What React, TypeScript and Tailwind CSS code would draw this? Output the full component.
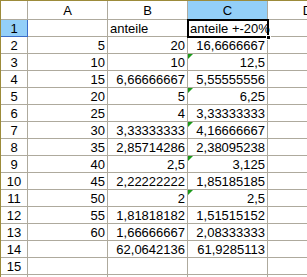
const rows: [string, string, string][] = [
  ["", "anteile", "anteile +-20%"],
  ["5", "20", "16,6666667"],
  ["10", "10", "12,5"],
  ["15", "6,66666667", "5,55555556"],
  ["20", "5", "6,25"],
  ["25", "4", "3,33333333"],
  ["30", "3,33333333", "4,16666667"],
  ["35", "2,85714286", "2,38095238"],
  ["40", "2,5", "3,125"],
  ["45", "2,22222222", "1,85185185"],
  ["50", "2", "2,5"],
  ["55", "1,81818182", "1,51515152"],
  ["60", "1,66666667", "2,08333333"],
  ["", "62,0642136", "61,9285113"],
  ["", "", ""],
  ["", "", ""],
];

// rows whose C cell shows the green error marker
const flagged = [3, 5, 7, 9, 11];

function Marker() {
  return (
    <span className="absolute left-0 top-0 h-0 w-0 border-t-[5px] border-r-[5px] border-t-[#1a9a1a] border-r-transparent" />
  );
}

export default function App() {
  const line = "border-[#aeaa9d]";
  return (
    <div
      className="h-[277px] w-[307px] overflow-hidden bg-white text-[13px] leading-none text-black"
      style={{ fontFamily: '"Liberation Sans", Arial, sans-serif' }}
    >
      <div className="relative grid grid-cols-[27px_80px_80px_80px_80px] border-l border-t border-[#9c8b3a]">
        {/* column headers */}
        <div className={`h-[19px] border-r border-b ${line}`} />
        {["A", "B", "C", "D"].map((c) => (
          <div
            key={c}
            className={`flex h-[19px] items-center justify-center border-r border-b ${line} ${
              c === "C" ? "bg-[#93cff8]" : ""
            }`}
          >
            {c}
          </div>
        ))}

        {rows.map((r, i) => {
          const n = i + 1;
          const sel = n === 1;
          return [
            <div
              key={`h${n}`}
              className={`flex h-[17px] items-center justify-center border-r border-b ${
                sel ? "border-[#3a6cc8] bg-[#93cff8]" : line
              }`}
            >
              {n}
            </div>,
            <div key={`a${n}`} className={`flex h-[17px] items-center justify-end border-r border-b pr-[2px] ${line}`}>
              {r[0]}
            </div>,
            <div
              key={`b${n}`}
              className={`flex h-[17px] items-center whitespace-nowrap border-r border-b ${line} ${
                sel ? "justify-start pl-[2px]" : "justify-end pr-[2px]"
              }`}
            >
              {r[1]}
            </div>,
            <div
              key={`c${n}`}
              className={`relative flex h-[17px] items-center whitespace-nowrap border-r border-b ${line} ${
                sel ? "justify-start pl-[2px]" : "justify-end pr-[2px]"
              }`}
            >
              {flagged.includes(n) && <Marker />}
              {r[2]}
            </div>,
            <div key={`d${n}`} className={`h-[17px] border-r border-b ${line}`} />,
          ];
        })}

        {/* active cell C1 */}
        <div className="pointer-events-none absolute left-[186px] top-[18px] h-[19px] w-[82px] border-2 border-black">
          <span className="absolute bottom-[-4px] right-[-4px] h-[5px] w-[5px] border border-white bg-black" />
        </div>
      </div>
    </div>
  );
}
